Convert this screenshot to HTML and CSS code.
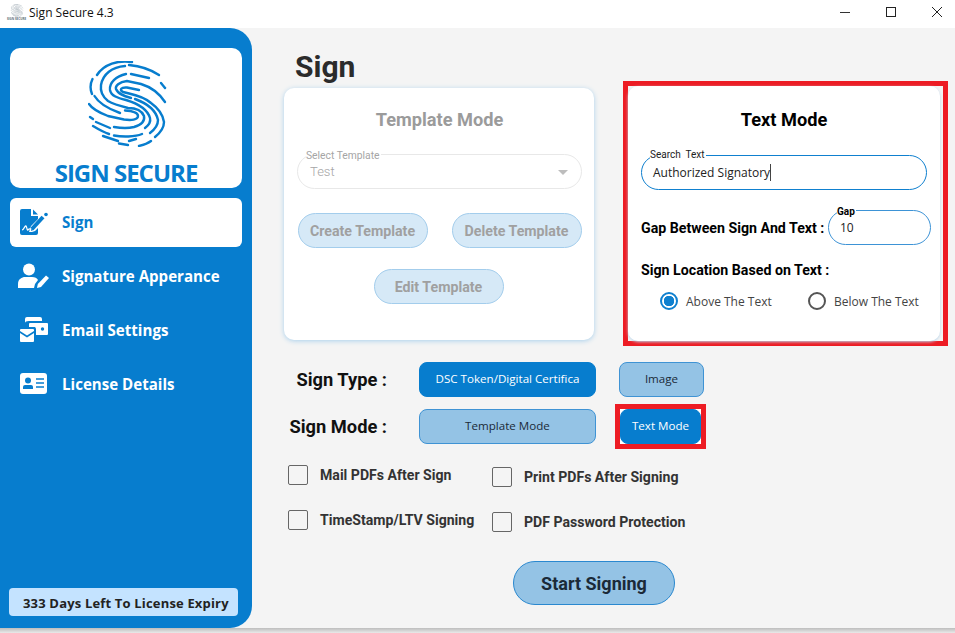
FILE: index.html
```html
<!DOCTYPE html>
<html lang="en">
<head>
  <meta charset="UTF-8" />
  <meta name="viewport" content="width=device-width, initial-scale=1.0" />
  <title>Sign Secure 4.3</title>
  <link rel="stylesheet" href="styles.css">
</head>
<body>
  <svg class="defs" width="0" height="0">
    <symbol id="fingerprint" viewBox="88 61 79 86">
      <g fill="none" stroke="currentColor" stroke-width="2.400" stroke-linecap="round">
        <path d="M132 62C118 60 104 64 97 75"/>
        <path d="M92.500 79C90 84 90 89 92 94"/>
        <path d="M159 75C150 69 140 66 129 65"/>
        <path d="M125 66C112 67 103 74 101 85C100 92 103 97 108 101C113 104 120 106 128 108C136 108 142 111 144 116C145 121 141 125 134 127C128 128.500 120 128 114 127"/>
        <path d="M161 83L165 88"/>
        <path d="M149 78L131 74"/>
        <path d="M126 74C116 76 109 83 110 90C111 96 118 98 126 100C136 103 147 108 150 118C151 122 149 125 145 128"/>
        <path d="M165 102C159 93 151 87 141 84L127 81C119 82 115 86 116 89C118 94 124 96 131 98"/>
        <path d="M135 99C146 103 156 110 158 120C158 126 154 130 150 133"/>
        <path d="M139 90L127 87.500C121 87 119 90 123 92C130 94 142 95 151 103C158 108 163 115 164 122C164 128 160 133 155 137"/>
        <path d="M89 104C93 110 100 113 108 116L124 119.500C131 120.500 138 120 138 116C138 112 132 111 125 110.500"/>
        <path d="M94.500 96C98 102 106 108 120 113"/>
        <path d="M90 117L93 119"/>
        <path d="M96 122L110 128"/>
        <path d="M93 126C98 129 103 132 109 134"/>
        <path d="M114 135.500C122 137 135 137 142 134"/>
        <path d="M103 136L118 141"/>
        <path d="M119 143.500L128 145"/>
        <path d="M136 139L129 141"/>
        <path d="M151 141C147 144 143 145 139 146"/>
      </g>
    </symbol>
  </svg>

  <div class="titlebar">
    <div class="app-mark">
      <svg class="app-print" width="14" height="14"><use href="#fingerprint"/></svg>
      <span class="app-mark-text">SIGN SECURE</span>
    </div>
    <span class="app-name">Sign Secure 4.3</span>
    <div class="win-controls">
      <svg width="12" height="12" viewBox="0 0 12 12"><path d="M1 6.500H11" stroke="#333" fill="none"/></svg>
      <svg width="12" height="12" viewBox="0 0 12 12"><rect x="1.500" y="1.500" width="9" height="9" stroke="#222" fill="none"/></svg>
      <svg width="12" height="12" viewBox="0 0 12 12"><path d="M1 1L11 11M11 1L1 11" stroke="#222" fill="none"/></svg>
    </div>
  </div>

  <div class="window">
    <aside class="sidebar">
      <div class="logo-card">
        <svg class="logo-print" width="79" height="86"><use href="#fingerprint"/></svg>
        <div class="logo-text">SIGN SECURE</div>
      </div>
      <nav class="nav">
        <div class="nav-item active">
          <svg class="nav-icon" width="30" height="26" viewBox="0 0 30 26">
            <path d="M3 0H12V7H19V10L12 17L10 23H13L16 22L19 19V24Q19 26 17 26H3Q1 26 1 24V2Q1 0 3 0Z" fill="#077dce"/>
            <path d="M14 0.500L19 5.500H14Z" fill="#077dce"/>
            <path d="M3 21C5 21 6 16 7 17S8 22 9 21S10 19 12 21" stroke="#fff" stroke-width="1.200" fill="none"/>
            <path d="M13 20L24 8" stroke="#077dce" stroke-width="4" fill="none"/>
            <path d="M12 22L12.500 19L14.500 21Z" fill="#077dce"/>
            <circle cx="27" cy="5.500" r="1.800" fill="#077dce"/>
          </svg>
          <span>Sign</span>
        </div>
        <div class="nav-item">
          <svg class="nav-icon" width="32" height="26" viewBox="0 0 32 26">
            <circle cx="11" cy="6.500" r="6"/>
            <path d="M0 25V21C0 16 4 14 7 14H14C17 14 19 15 20 17L17 21L16 25Z"/>
            <path d="M19 25L19.800 21L28 12.500L31 15L23 24Z"/>
          </svg>
          <span>Signature Apperance</span>
        </div>
        <div class="nav-item">
          <svg class="nav-icon" width="30" height="26" viewBox="0 0 30 26">
            <path d="M6 6V2Q6 0 8 0H21Q23 0 23 2V4H10Q6 4 6 6Z"/>
            <path d="M10 7Q10 6 11 6H28Q29 6 29 7V17Q29 18 28 18H17V12Q17 11 16 10H10Z"/>
            <circle cx="23.500" cy="12" r="1.700" fill="#077dce"/>
            <path d="M1 13Q1 12 2 12H14Q15 12 15 13V14L8 18.500L1 14Z"/>
            <path d="M1 16L8 20.500L15 16V24Q15 25 14 25H2Q1 25 1 24Z"/>
          </svg>
          <span>Email Settings</span>
        </div>
        <div class="nav-item">
          <svg class="nav-icon" width="30" height="26" viewBox="0 0 30 26">
            <rect x="1" y="2" width="27" height="21" rx="3"/>
            <circle cx="9" cy="9.500" r="3" fill="#077dce"/>
            <path d="M4 18V16Q4 14 6 14H12Q14 14 14 16V18Z" fill="#077dce"/>
            <path d="M17 8H25M17 12H25M17 16H25" stroke="#077dce" stroke-width="1.500"/>
          </svg>
          <span>License Details</span>
        </div>
      </nav>
      <div class="expiry">333 Days Left To License Expiry</div>
    </aside>

    <main class="main">
      <h1 class="page-title">Sign</h1>

      <div class="panels">
        <section class="card template-card">
          <h2>Template Mode</h2>
          <div class="field select-field">
            <label>Select Template</label>
            <span class="field-value">Test</span>
            <span class="caret"></span>
          </div>
          <div class="template-btns">
            <button class="pill">Create Template</button>
            <button class="pill">Delete Template</button>
            <button class="pill">Edit Template</button>
          </div>
        </section>

        <div class="red-frame">
          <section class="card text-card">
            <h2>Text Mode</h2>
            <div class="field search-field">
              <label>Search&nbsp; Text</label>
              <span class="field-value typed">Authorized Signatory</span>
            </div>
            <div class="gap-row">
              <span class="strong">Gap Between Sign And Text :</span>
              <div class="field gap-field">
                <label>Gap</label>
                <span class="field-value">10</span>
              </div>
            </div>
            <div class="strong location-label">Sign Location Based on Text :</div>
            <div class="radios">
              <div class="radio-item"><span class="radio on"></span>Above The Text</div>
              <div class="radio-item"><span class="radio"></span>Below The Text</div>
            </div>
          </section>
        </div>
      </div>

      <div class="option-row">
        <span class="option-label">Sign Type :</span>
        <button class="opt wide selected">DSC Token/Digital Certifica</button>
        <button class="opt small">Image</button>
      </div>
      <div class="option-row second">
        <span class="option-label">Sign Mode :</span>
        <button class="opt wide">Template Mode</button>
        <div class="opt-frame"><button class="opt selected">Text Mode</button></div>
      </div>

      <div class="checks">
        <div class="check-col">
          <div class="check"><span class="box"></span>Mail PDFs After Sign</div>
          <div class="check"><span class="box"></span>TimeStamp/LTV Signing</div>
        </div>
        <div class="check-col right">
          <div class="check"><span class="box"></span>Print PDFs After Signing</div>
          <div class="check"><span class="box"></span>PDF Password Protection</div>
        </div>
      </div>

      <button class="start">Start Signing</button>
    </main>
  </div>
  <div class="bottom-edge"></div>
</body>
</html>
```

FILE: styles.css
```css
* {
  box-sizing: border-box;
}
body {
  margin: 0;
  width: 955px;
  height: 633px;
  overflow: hidden;
  background: #f4f4f4;
  font-family: Roboto, sans-serif;
}
.defs {
  position: absolute;
}
button {
  font-family: inherit;
  padding: 0;
}

/* title bar */
.titlebar {
  height: 28px;
  background: #fff;
  display: flex;
  align-items: center;
  padding-left: 8px;
}
.app-mark {
  width: 17px;
  height: 17px;
  margin-top: -4px;
  color: #8b99a6;
  display: flex;
  flex-direction: column;
  align-items: center;
}
.app-mark-text {
  font: bold 3px "Open Sans", sans-serif;
  color: #5d6b78;
  white-space: nowrap;
}
.app-name {
  margin-left: 4px;
  margin-top: -3px;
  font: 12px "Open Sans", sans-serif;
  color: #111;
}
.win-controls {
  margin-left: auto;
  margin-top: -5px;
  margin-right: 12px;
  display: flex;
  gap: 34px;
}

/* sidebar */
.window {
  display: flex;
  height: 600px;
}
.sidebar {
  width: 252px;
  background: #077dce;
  border-radius: 0 22px 22px 0;
  padding: 20px 10px 12px;
  display: flex;
  flex-direction: column;
}
.logo-card {
  height: 140px;
  background: #fff;
  border-radius: 10px;
  color: #077dce;
  display: flex;
  flex-direction: column;
  align-items: center;
  padding-top: 13px;
}
.logo-print {
  display: block;
  margin-left: 3px;
}
.logo-text {
  font: 700 24px/28px "Open Sans", sans-serif;
  letter-spacing: -1px;
  margin-top: 12px;
}
.nav {
  margin-top: 10px;
  display: flex;
  flex-direction: column;
  gap: 5px;
}
.nav-item {
  height: 49px;
  border-radius: 6px;
  display: flex;
  align-items: center;
  color: #fff;
  font: 700 15.100px "Open Sans", sans-serif;
  padding: 0 0 2px 7px;
}
.nav-icon {
  fill: #fff;
  width: 34px;
  margin-right: 11px;
  flex: none;
}
.nav-item.active {
  background: #fff;
  color: #077dce;
}
.expiry {
  margin-top: auto;
  margin-left: -1px;
  width: 229px;
  height: 28px;
  background: #c4e3ff;
  border-radius: 4px;
  color: #222;
  font: 700 13px/30px "Open Sans", sans-serif;
  letter-spacing: 0.170px;
  padding-left: 14px;
  white-space: nowrap;
}

/* main column */
.main {
  flex: 1;
}
.page-title {
  margin: 0;
  height: 53px;
  padding: 22px 0 0 43px;
  font-size: 30px;
  line-height: 34px;
  font-weight: 700;
  color: #2b2b2b;
}
.panels {
  display: flex;
  align-items: flex-start;
  padding-left: 32px;
}
.card {
  background: #fff;
  border-radius: 10px;
  text-align: center;
}
.card h2 {
  margin: 0;
  font-size: 18.200px;
  line-height: 24px;
  font-weight: 700;
}
.template-card {
  width: 310px;
  height: 252px;
  margin-top: 7px;
  padding: 20px 12px 0 13px;
  box-shadow: 0 1px 5px #a9d0ec;
}
.template-card h2 {
  color: #9b9b9b;
}
.red-frame {
  width: 325px;
  height: 265px;
  margin-left: 29px;
  border: 5px solid #ed1c24;
  padding-right: 3px;
}
.text-card {
  height: 255px;
  padding: 22px 0 0 13px;
  box-shadow: 0 1px 3px #b9d6ec;
}
.text-card h2 {
  margin-left: -13px;
}

/* floating label inputs */
.field {
  position: relative;
  height: 35px;
  border-radius: 18px;
  border: 1.700px solid #0f80cf;
  display: flex;
  align-items: center;
  text-align: left;
}
.field label {
  position: absolute;
  top: -7px;
  left: 8px;
  background: #fff;
  font-size: 10px;
  line-height: 11px;
  color: #222;
  padding-right: 1px;
  white-space: nowrap;
}
.field-value {
  font: 12px "Open Sans", sans-serif;
  color: #222;
}
.select-field {
  margin-top: 22px;
  border: 1.500px solid #e8e8e8;
  padding-left: 12px;
}
.select-field label {
  color: #a5a5a5;
  font-size: 10.300px;
  top: -5px;
}
.select-field .field-value {
  font: 300 13px Roboto, sans-serif;
  color: #a5a5a5;
}
.caret {
  position: absolute;
  right: 13px;
  top: 15px;
  border: 5px solid transparent;
  border-top: 5px solid #bdbdbd;
  border-bottom: 0;
}
.template-btns {
  display: flex;
  flex-wrap: wrap;
  justify-content: center;
  gap: 21px 24px;
  margin-top: 24px;
}
.pill {
  width: 130px;
  height: 35px;
  border-radius: 18px;
  border: 1px solid #a3cdec;
  background: #d6e9f7;
  color: #a0a0a0;
  font-size: 14.200px;
  font-weight: 700;
}
.pill:last-child {
  margin-left: -2px;
}
.search-field {
  width: 286px;
  margin-top: 23px;
  padding-left: 11px;
}
.typed {
  border-right: 1px solid #444;
  line-height: 17px;
}
.strong {
  font-size: 14.200px;
  font-weight: 700;
  color: #000;
  white-space: nowrap;
  text-align: left;
}
.gap-row {
  display: flex;
  align-items: center;
  justify-content: space-between;
  margin-top: 20px;
  height: 35px;
  width: 290px;
}
.gap-field {
  width: 103px;
  height: 35px;
  border-width: 1.500px;
  border-color: #3d93d6;
  padding-left: 11px;
}
.gap-field label {
  top: -5px;
  color: #000;
  font-weight: 700;
}
.location-label {
  margin-top: 17px;
  line-height: 17px;
}
.radios {
  display: flex;
  margin: 13px 0 0 19px;
}
.radio-item {
  display: flex;
  align-items: center;
  width: 148px;
  flex: none;
  font: 12px "Open Sans", sans-serif;
  color: #444;
  white-space: nowrap;
}
.radio {
  width: 18px;
  height: 18px;
  border: 2px solid #555;
  border-radius: 50%;
  margin-right: 8px;
  flex: none;
}
.radio.on {
  border-color: #0f80cf;
  background: radial-gradient(circle, #0f80cf 0 5px, #fff 5.500px);
}

/* sign type, sign mode */
.option-row {
  display: flex;
  align-items: center;
  margin-top: 16px;
  height: 35px;
}
.option-row.second {
  margin-top: 12px;
}
.option-label {
  width: 135px;
  margin-right: 32px;
  text-align: right;
  font-size: 18.300px;
  font-weight: 700;
  color: #111;
}
.opt {
  height: 35px;
  border-radius: 8px;
  border: 1px solid #3f93d4;
  background: #94c3e5;
  color: #1b2a38;
  font: 11.600px "Open Sans", sans-serif;
  white-space: nowrap;
  overflow: hidden;
  padding-bottom: 2px;
}
.opt.wide {
  width: 177px;
}
.opt.small {
  width: 85px;
  margin-left: 23px;
}
.opt.selected {
  background: #077dce;
  border-color: #077dce;
  color: #fff;
}
.opt-frame {
  width: 91px;
  height: 45px;
  margin: -5px 0 -5px 19px;
  border: 5px solid #ed1c24;
  background: #fff;
}
.opt-frame .opt {
  display: block;
  width: 100%;
}

/* checkboxes */
.checks {
  display: flex;
  margin: 21px 0 0 36px;
}
.check-col {
  width: 204px;
  display: flex;
  flex-direction: column;
  gap: 25px;
}
.check-col.right {
  margin-top: 2px;
}
.check {
  display: flex;
  align-items: center;
  height: 20px;
  font-size: 14.100px;
  font-weight: 700;
  color: #333;
  white-space: nowrap;
}
.box {
  width: 20px;
  height: 20px;
  border: 1.500px solid #666;
  border-radius: 2px;
  margin-right: 12px;
  flex: none;
}
.start {
  display: block;
  width: 162px;
  height: 44px;
  margin: 29px 0 0 261px;
  border-radius: 22px;
  border: 1px solid #2a88cf;
  background: #94c3e5;
  color: #1b2a38;
  font-size: 18px;
  font-weight: 700;
}
.bottom-edge {
  height: 5px;
  background: linear-gradient(#bdbdbd, #e9e9e9);
}
```
